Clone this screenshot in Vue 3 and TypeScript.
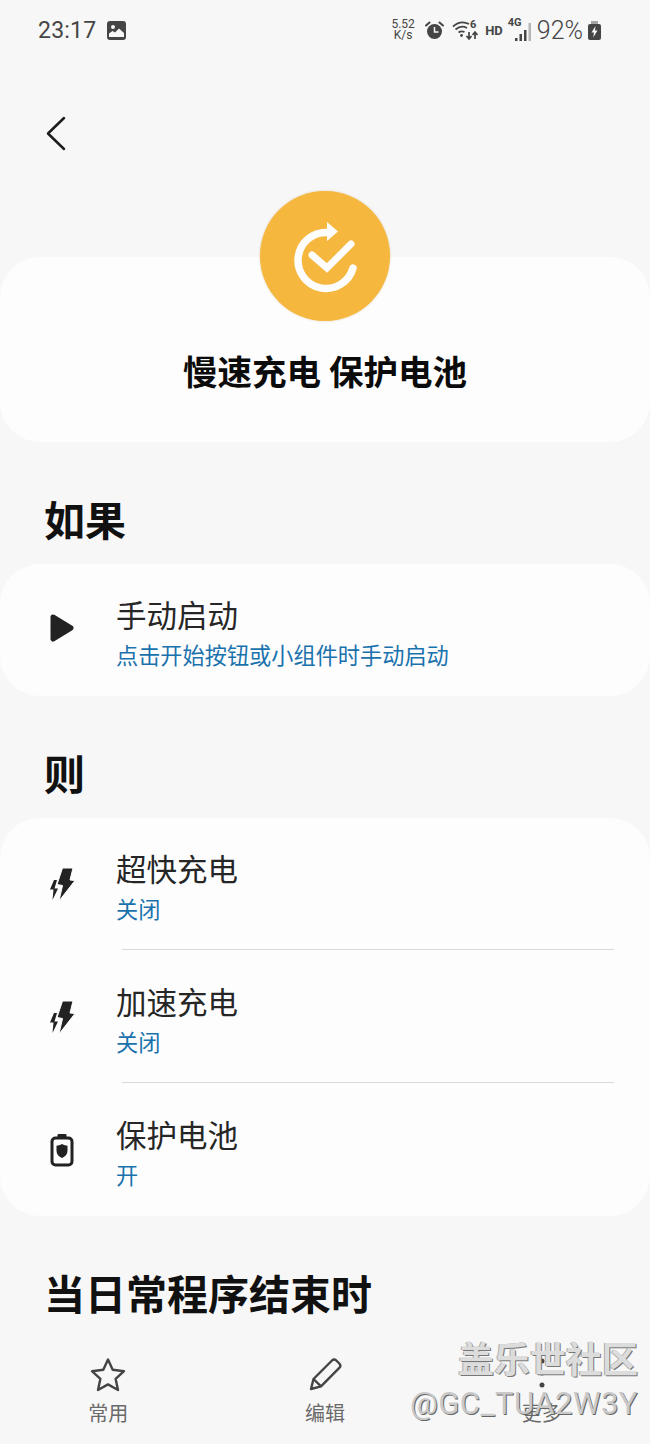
<script setup lang="ts">
interface Row { title: string; sub: string; icon: 'bolt' | 'battery' }
const rows: Row[] = [
  { title: '超快充电', sub: '关闭', icon: 'bolt' },
  { title: '加速充电', sub: '关闭', icon: 'bolt' },
  { title: '保护电池', sub: '开', icon: 'battery' },
]
</script>

<template>
  <div class="screen">
    <header class="status">
      <div class="status-left">
        <span class="time">23:17</span>
        <svg class="st-img" width="19" height="19" viewBox="0 0 19 19">
          <rect x="0" y="0" width="19" height="19" rx="3" fill="#454545" />
          <circle cx="6" cy="6" r="2" fill="#f7f7f7" />
          <path d="M2 16v-3.500l3.500-2.500 2.500 1.500 4-4 5 4.500v4z" fill="#f7f7f7" />
        </svg>
      </div>
      <div class="status-right">
        <span class="speed">5.52<br />K/s</span>
        <svg class="st-alarm" width="19" height="19" viewBox="0 0 19 19">
          <circle cx="9.500" cy="10.500" r="7.500" fill="#454545" />
          <path d="M1 4.500 4.500 1.500M18 4.500 14.500 1.500" stroke="#454545" stroke-width="2" stroke-linecap="round" />
          <path d="M9.500 6v5h4" fill="none" stroke="#f7f7f7" stroke-width="1.500" />
        </svg>
        <svg class="st-wifi" width="27" height="22" viewBox="0 0 27 22">
          <path d="M1 7.500C6 3 12 2.500 17 5M3.500 10.500C7 7.500 11.500 7 15 9M6.500 13.500C8.500 12 10.500 12 12.500 13" fill="none" stroke="#454545" stroke-width="1.700" />
          <circle cx="9.500" cy="16.500" r="1.400" fill="#454545" />
          <path d="M17 13v6M14.500 17l2.500 3 2.500-3M23 20v-6M20.500 16l2.500-3 2.500 3" fill="none" stroke="#454545" stroke-width="1.700" />
          <text x="18" y="9" class="st-six">6</text>
        </svg>
        <span class="hd">HD</span>
        <div class="signal">
          <span class="four-g">4G</span>
          <svg width="18" height="20" viewBox="0 0 18 20">
            <rect x="0" y="16" width="2.500" height="3" fill="#454545" />
            <rect x="4.500" y="12" width="2.500" height="7" fill="#454545" />
            <rect x="9" y="8" width="2.500" height="11" fill="#454545" />
            <rect x="13.500" y="1" width="2.500" height="18" fill="#b5b5b5" />
          </svg>
        </div>
        <span class="battery-pct">92%</span>
        <svg class="st-batt" width="13" height="19" viewBox="0 0 13 19">
          <rect x="3" y="0" width="7" height="3" fill="#a5a5a5" />
          <rect x="0" y="3" width="13" height="16" rx="2" fill="#454545" />
          <path d="M7.500 5 3.500 11.500h2.500l-.8 5 4.300-7H7z" fill="#f7f7f7" />
        </svg>
      </div>
    </header>

    <main class="main">
      <div class="topbar">
        <svg width="24" height="40" viewBox="0 0 24 40">
          <path d="M20 4 4 19.500 20 35" fill="none" stroke="#1c1c1c" stroke-width="2.500" stroke-linecap="round" stroke-linejoin="round" />
        </svg>
      </div>

      <section class="hero">
        <div class="hero-badge">
          <svg width="74" height="74" viewBox="0 0 74 74">
            <path d="M40 13.500A28 28 0 1 0 65 49" fill="none" stroke="#fdfdfd" stroke-width="7.500" stroke-linecap="round" />
            <path d="M39 3 50 12.500 39 22z" fill="#fdfdfd" />
            <path d="M24 36 39 49 63 25" fill="none" stroke="#fdfdfd" stroke-width="7" stroke-linecap="round" stroke-linejoin="miter" />
          </svg>
        </div>
        <h1 class="hero-title">慢速充电 保护电池</h1>
      </section>

      <h2 class="section-title">如果</h2>
      <section class="card">
        <div class="row">
          <div class="row-icon icon-play">
            <svg width="26" height="32" viewBox="0 0 26 32">
              <path d="M4 5 22 16 4 27z" fill="#222" stroke="#222" stroke-width="5" stroke-linejoin="round" />
            </svg>
          </div>
          <div class="row-text">
            <div class="row-title">手动启动</div>
            <div class="row-sub">点击开始按钮或小组件时手动启动</div>
          </div>
        </div>
      </section>

      <h2 class="section-title">则</h2>
      <section class="card">
        <div v-for="r in rows" :key="r.title" class="row">
          <div class="row-icon">
            <svg v-if="r.icon === 'bolt'" width="28" height="36" viewBox="0 0 28 36">
              <path d="M6 14 2 23.500h3.500L4.500 34 10 22.500H6.500L9 14z" fill="#222" />
              <path d="M14.500 2H25l-3 12 5 .5L11 35l3.500-15.500-5.500-1z" fill="#222" stroke="#fdfdfd" stroke-width="1" stroke-linejoin="round" />
            </svg>
            <svg v-else width="24" height="34" viewBox="0 0 24 34">
              <rect x="7.500" y="1" width="9" height="4" rx="1" fill="#222" />
              <rect x="2" y="5" width="20" height="27" rx="3.500" fill="none" stroke="#222" stroke-width="3" />
              <path d="M12 11c2 1.200 4 1.700 5.500 1.700v5c0 3.500-2.300 6-5.500 7.300-3.200-1.300-5.500-3.800-5.500-7.300v-5C8 12.700 10 12.200 12 11z" fill="#222" />
            </svg>
          </div>
          <div class="row-text">
            <div class="row-title">{{ r.title }}</div>
            <div class="row-sub">{{ r.sub }}</div>
          </div>
        </div>
      </section>

      <h2 class="section-title">当日常程序结束时</h2>
    </main>

    <nav class="nav">
      <div class="tab">
        <svg width="36" height="36" viewBox="0 0 36 36">
          <path d="M18 2.500 22.700 12.800 34 14.200 25.600 21.800 28 33 18 27.400 8 33 10.400 21.800 2 14.200 13.300 12.800z" fill="none" stroke="#444" stroke-width="2.400" stroke-linejoin="round" />
        </svg>
        <span>常用</span>
      </div>
      <div class="tab">
        <svg width="36" height="36" viewBox="0 0 36 36">
          <path d="M4 32 6.500 22 25 3.500c1.300-1.300 3-1.300 4.300 0l3 3c1.300 1.300 1.300 3 0 4.300L14 29.300z" fill="none" stroke="#444" stroke-width="2.400" stroke-linejoin="round" />
          <path d="M6.500 22 14 29.300" fill="none" stroke="#444" stroke-width="2.400" />
        </svg>
        <span>编辑</span>
      </div>
      <div class="tab">
        <svg width="36" height="36" viewBox="0 0 36 36">
          <circle cx="18" cy="4" r="2.500" fill="#444" />
          <circle cx="18" cy="16" r="2.500" fill="#444" />
          <circle cx="18" cy="28" r="2.500" fill="#444" />
        </svg>
        <span>更多</span>
      </div>
    </nav>

    <div class="watermark">
      <div class="wm-cn">盖乐世社区</div>
      <div class="wm-en">@GC_TUA2W3Y</div>
    </div>
  </div>
</template>

<style>
html, body { margin: 0; background: #f7f7f7; }
</style>

<style scoped>
.screen {
  position: relative;
  width: 650px;
  height: 1444px;
  overflow: hidden;
  background: #f7f7f7;
  display: flex;
  flex-direction: column;
  font-family: "Noto Sans CJK SC", "Noto Sans", sans-serif;
  color: #222;
}
.status {
  height: 60px;
  flex: none;
  display: flex;
  align-items: center;
  justify-content: space-between;
  padding: 0 49px 0 38px;
  color: #454545;
  font-family: Roboto, sans-serif;
}
.status-left, .status-right { display: flex; align-items: center; }
.time { font-size: 23px; letter-spacing: 0.2px; }
.st-img { margin-left: 11px; }
.speed { font-size: 12px; line-height: 11px; text-align: center; width: 24px; margin-right: 10px; }
.st-alarm { margin-right: 8px; }
.st-wifi { margin-right: 6px; }
.st-six { font-size: 11px; font-weight: 700; fill: #454545; font-family: Roboto, sans-serif; }
.hd { font-size: 13px; font-weight: 700; margin-right: 4px; }
.signal { position: relative; width: 26px; height: 24px; display: flex; justify-content: flex-end; align-items: flex-end; margin-right: 4px; }
.four-g { position: absolute; left: 1px; top: -1px; font-size: 11px; font-weight: 700; line-height: 11px; }
.battery-pct { font-size: 25px; font-weight: 300; margin-right: 5px; }
.main { flex: 1; min-height: 0; overflow: hidden; }
.topbar { height: 197px; padding: 54px 0 0 44px; box-sizing: border-box; }
.topbar svg { display: block; }
.hero {
  position: relative;
  height: 185px;
  background: #fdfdfd;
  border-radius: 40px;
}
.hero-badge {
  position: absolute;
  left: 260px;
  top: -66px;
  width: 130px;
  height: 130px;
  border-radius: 50%;
  background: #f6b73f;
  box-shadow: 0 0 2px rgba(200, 150, 60, 0.5);
  display: flex;
  align-items: center;
  justify-content: center;
}
.hero-title {
  margin: 0;
  padding-top: 88px;
  text-align: center;
  font-size: 34.500px;
  line-height: 50px;
  font-weight: 700;
  color: #0b0b0b;
}
.section-title {
  margin: 48px 0 18px;
  padding-left: 44px;
  font-size: 41px;
  line-height: 56px;
  font-weight: 700;
  color: #111;
}
.card { background: #fdfdfd; border-radius: 40px; }
.row {
  position: relative;
  height: 132px;
  box-sizing: border-box;
  padding-left: 44px;
  display: flex;
  align-items: center;
}
.row + .row { height: 133px; }
.row + .row::before {
  content: "";
  position: absolute;
  left: 122px;
  right: 36px;
  top: -1px;
  height: 1px;
  background: #d9d9d9;
}
.row-icon { width: 36px; margin-right: 36px; display: flex; justify-content: center; flex: none; }
.row-icon svg { display: block; }
.icon-play { margin-top: -4px; }
.row-text { align-self: flex-start; padding-top: 30px; }
.row + .row .row-text { padding-top: 31px; }
.row-title { font-size: 30.500px; line-height: 40px; color: #262626; }
.row-sub { font-size: 22.200px; line-height: 40px; color: #1a72ad; }
.nav {
  height: 104px;
  flex: none;
  display: grid;
  grid-template-columns: repeat(3, 1fr);
  box-sizing: border-box;
}
.tab { display: flex; flex-direction: column; align-items: center; color: #6a6a6a; font-size: 20px; line-height: 28px; padding-top: 17px; box-sizing: border-box; }
.tab svg { display: block; margin-bottom: 6px; }
.watermark {
  position: absolute;
  right: 12px;
  top: 1333px;
  text-align: right;
  pointer-events: none;
}
.wm-cn {
  font-size: 36px;
  line-height: 48px;
  font-weight: 700;
  color: #dcdcdc;
  text-shadow: 1px 1px 0 #777, -1px 0 0 #aaa;
}
.wm-en {
  font-family: Roboto, sans-serif;
  font-size: 31px;
  line-height: 46px;
  color: #c9c9c9;
  text-shadow: 1px 1px 0 #666;
  letter-spacing: 0.5px;
}
</style>
